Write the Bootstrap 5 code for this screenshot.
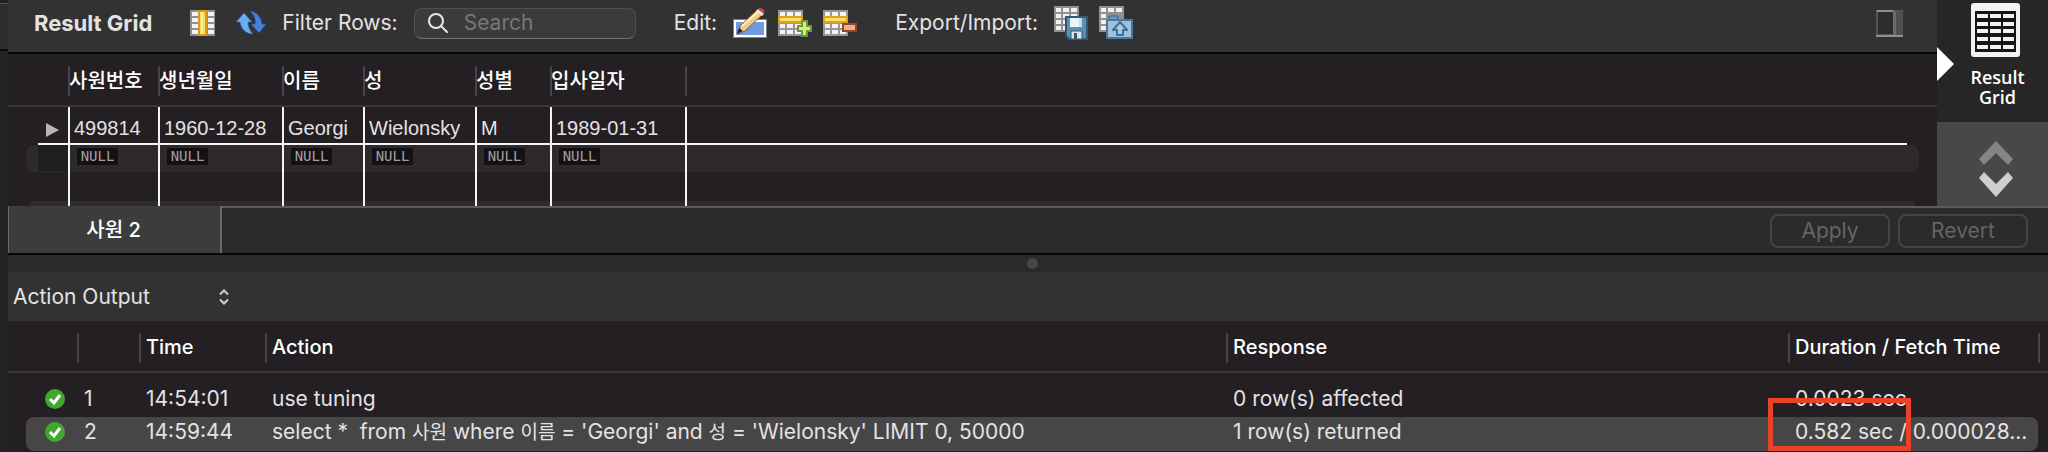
<!DOCTYPE html>
<html lang="ko" data-bs-theme="dark">
<head>
<meta charset="utf-8">
<meta name="viewport" content="width=device-width, initial-scale=1">
<title>Result Grid</title>
<link href="https://cdn.jsdelivr.net/npm/bootstrap@5.3.0/dist/css/bootstrap.min.css" rel="stylesheet">
<script src="https://cdn.jsdelivr.net/npm/bootstrap@5.3.0/dist/js/bootstrap.bundle.min.js" defer></script>
<style>
  body { background: #231f22; color: #e4e2e4; font: 21px/24px Inter, "Noto Sans CJK KR", sans-serif; min-height: 100vh; overflow-x: hidden; }
  .gutter { width: 8px; background: #242424; }
  .gutter-top { height: 51px; background: #2e2e2e; border-bottom: 2px solid #0c0c0c; }
  .gutter-top::before { content: ""; display: block; height: 4px; border-bottom: 1px solid #555; background: #202020; }
  .content-col { min-width: 0; }

  .toolbar { height: 54px; background: #323232; border-bottom: 2px solid #060606; padding: 0 34px 6px 26px; gap: 38px; white-space: nowrap; }
  .tool-group { gap: 16px; }
  .tool-icons { gap: 11px; }
  .icon-pair { gap: 21px; }
  .tool { border: 0; padding: 0; background: none; line-height: 0; }
  .tool svg { display: block; }
  .pane-title { font-size: 22px; }
  .search-box { width: 222px; height: 31px; background: #3b3b3b; border: 1px solid #505050; border-bottom-color: #747474; border-radius: 8px; padding-left: 12px; gap: 14px; }
  .search-box input { background: none; border: 0; outline: 0; color: #ddd; width: 150px; padding: 0; line-height: 24px; }
  .search-box input::placeholder { color: #777; opacity: 1; }

  .data-grid { width: 100%; table-layout: fixed; border-collapse: separate; border-spacing: 0; }
  .data-grid th, .data-grid td { padding: 0; white-space: pre; position: relative; }
  .data-grid thead th { border-bottom: 2px solid #3b383a; color: #fff; font-size: 20px; font-weight: 500; padding-top: 2px; }
  .data-grid th.rule::before { content: ""; position: absolute; left: 0; top: 12px; height: 30px; width: 2px; background: #474447; }

  .results { font-family: "Liberation Sans", "Noto Sans CJK KR", sans-serif; font-size: 20px; }
  .results th { height: 53px; padding-left: 1px !important; }
  .results tbody td + td { border-left: 2px solid #f4f4f4; padding-left: 4px; }
  .results .record td { height: 38px; padding-top: 4px; background: linear-gradient(#f4f4f4, #f4f4f4) left bottom / 100% 2px no-repeat; }
  .results .record td:first-child { background-position: right bottom; background-size: calc(100% - 30px) 2px; }
  .results .record td:last-child { background-size: calc(100% - 30px) 2px; }
  .results .blank td { height: 27px; background: #2d292c; vertical-align: top; line-height: 24px; }
  .results .blank td:first-child { background: linear-gradient(#1e1f1f, #1e1f1f) right top / 30px 26px no-repeat, linear-gradient(#2d292c, #2d292c) right top / 32px 100% no-repeat; }
  .results .blank td:first-child::before { content: ""; position: absolute; left: 18px; top: 0; bottom: 0; width: 12px; background: #2d292c; border-radius: 8px 0 0 8px; }
  .results .blank td:last-child { background: none; }
  .results .blank td:last-child::before { content: ""; position: absolute; inset: 0 18px 0 0; background: #2d292c; border-radius: 0 8px 8px 0; }
  .results .filler td { height: 34px; background: linear-gradient(#2d2b2c, #2d2b2c) left bottom / 100% 5px no-repeat; }
  .results .filler td:first-child { background-position: right bottom; background-size: calc(100% - 22px) 5px; }
  .results .filler td:last-child { background-size: calc(100% - 22px) 5px; }
  .null-tag { display: block; width: 41px; margin: 3px 0 0 3px; background: #131113; color: #a3a1a3; font: 14px/17px "DejaVu Sans Mono", monospace; text-align: center; border-radius: 1px; }
  .row-marker { display: block; margin: 4px 0 0 37px; }

  .side-panel { width: 111px; background: #262626; color: #fff; }
  .side-tab { height: 122px; padding: 3px 0 0 6px; border: 0; background: none; color: #fff; font: 600 18px/20px "Open Sans", sans-serif; position: relative; }
  .side-tab .pointer { position: absolute; left: 0; top: 47px; }
  .side-label { margin-top: 10px; padding-left: 4px; }
  .side-more { background: #484848; border: 0; padding: 10px 0 0 7px; }

  .tab-strip { height: 49px; background: #2b2b2b; border-top: 2px solid #5c5c5c; border-bottom: 2px solid #060606; }
  .result-tab { width: 214px; border: solid #6a6a6a; border-width: 0 2px 0 1px; background: #3b3d3d; color: #fff; font-size: 20px; font-weight: 500; margin-top: -2px; padding: 0 2px 0 0; }
  .strip-btn { height: 34px; border: 2px solid #444; border-radius: 8px; background: none; color: #656565; padding: 0; line-height: 24px; }
  .strip-btn.apply { width: 120px; }
  .strip-btn.revert { width: 130px; }
  .splitter { height: 17px; background: #2a2a2a; padding-left: 8px; }
  .splitter span { width: 11px; height: 11px; border-radius: 50%; background: #474747; }

  .output-bar { height: 49px; background: #323232; }
  .output-pick { width: 230px; appearance: none; border: 0; padding: 0 0 0 5px; color: #e4e2e4; line-height: 24px;
    background: url("data:image/svg+xml,%3Csvg xmlns='http://www.w3.org/2000/svg' width='12' height='18' fill='none' stroke='%23cfcfcf' stroke-width='2'%3E%3Cpath d='M2 6.500 6 2.500l4 4M2 11.500l4 4 4-4'/%3E%3C/svg%3E") right 8px center no-repeat; }

  .log th { height: 52px; padding-left: 7px !important; }
  .log td { height: 34px; padding-left: 7px; }
  .log tbody tr:first-child td { height: 44px; padding-top: 8px; }
  .log .chosen td { background: #464646; line-height: 24px; padding-bottom: 4px; }
  .log .chosen td:first-child { background: none; }
  .log .chosen td:first-child::before { content: ""; position: absolute; inset: 0 0 0 18px; background: #464646; border-radius: 8px 0 0 8px; }
  .log .chosen .last-cell { border-radius: 0 8px 8px 0; }
  .log .chosen .edge-cell { background: none; }
  .hangul { font-size: 19px; }
  .ok-mark { display: block; position: relative; margin-left: 30px; }
  .callout { position: absolute; left: -20px; top: -19px; width: 143px; height: 53px; border: 5px solid #e6432a; }
</style>
</head>
<body>
<div class="d-flex min-vh-100">
  <div class="gutter flex-shrink-0"><div class="gutter-top"></div></div>
  <div class="content-col flex-grow-1">

    <section class="d-flex">
      <div class="content-col flex-grow-1">
        <div class="toolbar d-flex align-items-center">
          <strong class="pane-title">Result Grid</strong>
          <div class="tool-group d-flex align-items-center">
            <div class="icon-pair d-flex align-items-center">
              <button class="tool" type="button" aria-label="Columns">
                <svg width="25" height="26" viewBox="0 0 25 26"><path fill="#8d8f92" d="M0 0h25v26H0z"/><path fill="#f2f3f5" d="M2 2h6v4H2zm0 6h6v4H2zm0 6h6v4H2zm0 6h6v4H2zM18 2h6v4h-6zm0 6h6v4h-6zm0 6h6v4h-6zm0 6h6v4h-6z"/><path fill="#f9dc6a" stroke="#d89a18" stroke-width="2" d="M9 1h7v24H9z"/><path fill="#fff0a0" d="M11 2h2v22h-2z"/></svg>
              </button>
              <button class="tool" type="button" aria-label="Refresh">
                <svg width="30" height="26" viewBox="0 0 30 26"><path fill="#6aaef2" stroke="#2c62b8" stroke-width=".7" d="M8 3l8 9h-4c0 5 2 9 5 12C10 24 5 19 4 12H0z"/><path fill="#477fdc" stroke="#2450a0" stroke-width=".7" d="M14 1c7 1 11 6 12 13h4l-7 9-8-9h4c1-5-1-9-5-13z"/></svg>
              </button>
            </div>
            <label for="filter-rows">Filter Rows:</label>
            <div class="search-box d-flex align-items-center">
              <svg width="23" height="22" viewBox="0 0 23 22" fill="none" stroke="#e8e8e8" stroke-width="2"><circle cx="9" cy="9" r="7"/><path d="M14 14l6 6" stroke-linecap="round"/></svg>
              <input id="filter-rows" type="text" placeholder="Search">
            </div>
          </div>
          <div class="tool-group d-flex align-items-center">
            <span>Edit:</span>
            <div class="tool-icons d-flex align-items-center">
              <button class="tool" type="button" aria-label="Edit row">
                <svg width="34" height="32" viewBox="0 0 34 32"><path fill="#7f8388" d="M0 12h34v19H0z"/><path fill="#6f9ae0" stroke="#fff" stroke-width="2" d="M2 14h30v15H2z"/><path fill="#f0c98a" stroke="#8a6030" d="M24 3l5 5L12 24l-7 3 2-8z"/><path stroke="#fff0cc" stroke-width="2" d="M9 19L25 5"/><path fill="#222" d="M6 21l4 3-6 3z"/><path fill="#e9e9e9" d="M23 4l2-2 6 5-2 2z"/><path fill="#d8443c" d="M25 2c2-3 8 1 6 5z"/></svg>
              </button>
              <button class="tool" type="button" aria-label="Add row">
                <svg width="34" height="28" viewBox="0 0 34 28"><path fill="#96989b" d="M0 1h25v26H0z"/><path fill="#f4f4f6" d="M2 3h5v4H2zm7 0h6v4H9zm8 0h6v4h-6zM2 15h5v4H2zm7 0h6v4H9zm8 0h6v4h-6zM2 21h5v4H2zm7 0h6v4H9zm8 0h6v4h-6z"/><path fill="#fbe36e" stroke="#e0a21c" stroke-width="2" d="M1 8h23v5H1z"/><path fill="#cdf08c" stroke="#6b9a35" stroke-width="2" d="M24 12h5v5h4v5h-4v5h-5v-5h-4v-5h4z"/></svg>
              </button>
              <button class="tool" type="button" aria-label="Delete row">
                <svg width="34" height="28" viewBox="0 0 34 28"><path fill="#96989b" d="M0 1h25v26H0z"/><path fill="#f4f4f6" d="M2 3h5v4H2zm7 0h6v4H9zm8 0h6v4h-6zM2 15h5v4H2zm7 0h6v4H9zm8 0h6v4h-6zM2 21h5v4H2zm7 0h6v4H9zm8 0h6v4h-6z"/><path fill="#fbe36e" stroke="#e0a21c" stroke-width="2" d="M1 8h23v5H1z"/><path fill="#eeb092" stroke="#9c4522" stroke-width="2" d="M20 15h13v7H20z"/></svg>
              </button>
            </div>
          </div>
          <div class="tool-group d-flex align-items-center">
            <span>Export/Import:</span>
            <div class="tool-icons d-flex align-items-center">
              <button class="tool" type="button" aria-label="Export">
                <svg width="34" height="34" viewBox="0 0 34 34"><path fill="#8f9194" d="M0 0h25v26H0z"/><path fill="#f1f1f3" d="M2 2h5v4H2zm7 0h6v4H9zm8 0h6v4h-6zM2 8h5v4H2zm7 0h6v4H9zm8 0h6v4h-6zM2 14h5v4H2zm7 0h6v4H9zM2 20h5v4H2zm7 0h6v4H9z"/><path fill="#5e8fb0" stroke="#2f597a" stroke-width="2" d="M12 11h21v22H15l-3-3z"/><path fill="#eef4f8" d="M16 12h12v9H16z"/><path fill="#c9dae6" d="M25 12h3v9h-3z"/><path fill="#dde3e8" stroke="#345c79" d="M17 25h11v8H17z"/><path fill="#345c79" d="M20 27h3v6h-3z"/></svg>
              </button>
              <button class="tool" type="button" aria-label="Import">
                <svg width="34" height="34" viewBox="0 0 34 34"><path fill="#8f9194" d="M0 0h25v26H0z"/><path fill="#f1f1f3" d="M2 2h5v4H2zm7 0h6v4H9zm8 0h6v4h-6zM2 8h5v4H2zm0 6h5v4H2zm0 6h5v4H2z"/><path fill="#6898bf" stroke="#3b678b" d="M10 10h9v6h-9z"/><path fill="#9cc2df" stroke="#4a789c" stroke-width="2" d="M8 14h25v18H8z"/><path fill="#a8cbe4" stroke="#426f92" stroke-width="2" stroke-linejoin="round" d="M21 16l7 8h-4v5h-6v-5h-4z"/></svg>
              </button>
            </div>
          </div>
          <button class="tool ms-auto" type="button" aria-label="Toggle panel">
            <svg width="27" height="27" viewBox="0 0 27 27"><path fill="#2c2c2c" stroke="#555" stroke-width="2" d="M1 1h25v24H1z"/><path fill="#505050" d="M17 1h9v24h-9z"/><path fill="#6c6c6c" d="M17 1h3v24h-3z"/><path stroke="#909090" stroke-width="2" d="M0 26h27M1 1h16"/></svg>
          </button>
        </div>

        <table class="data-grid results">
          <colgroup><col style="width:60px"><col style="width:90px"><col style="width:124px"><col style="width:81px"><col style="width:112px"><col style="width:75px"><col style="width:135px"><col></colgroup>
          <thead>
            <tr><th></th><th class="rule">사원번호</th><th class="rule">생년월일</th><th class="rule">이름</th><th class="rule">성</th><th class="rule">성별</th><th class="rule">입사일자</th><th class="rule"></th></tr>
          </thead>
          <tbody>
            <tr class="record"><td><svg class="row-marker" width="15" height="14" viewBox="0 0 15 14"><path fill="#b5b5b5" d="M1 0l13 7-13 7z"/></svg></td><td>499814</td><td>1960-12-28</td><td>Georgi</td><td>Wielonsky</td><td>M</td><td>1989-01-31</td><td></td></tr>
            <tr class="blank"><td></td><td><span class="null-tag">NULL</span></td><td><span class="null-tag">NULL</span></td><td><span class="null-tag">NULL</span></td><td><span class="null-tag">NULL</span></td><td><span class="null-tag">NULL</span></td><td><span class="null-tag">NULL</span></td><td></td></tr>
            <tr class="filler"><td></td><td></td><td></td><td></td><td></td><td></td><td></td><td></td></tr>
          </tbody>
        </table>
      </div>

      <aside class="side-panel d-flex flex-column flex-shrink-0">
        <button class="side-tab d-flex flex-column align-items-center" type="button">
          <svg class="pointer" width="17" height="34" viewBox="0 0 17 34"><path fill="#fff" d="M0 0l17 17L0 34z"/></svg>
          <svg width="49" height="54" viewBox="0 0 49 54"><rect width="49" height="54" rx="3" fill="#f2f2f2"/><path fill="#161616" d="M4 8h41v41H4z"/><path fill="#f2f2f2" d="M6 11h11v4H6zm13 0h11v4H19zm13 0h11v4H32zM6 19h11v4H6zm13 0h11v4H19zm13 0h11v4H32zM6 26h11v4H6zm13 0h11v4H19zm13 0h11v4H32zM6 34h11v4H6zm13 0h11v4H19zm13 0h11v4H32zM6 42h11v4H6zm13 0h11v4H19zm13 0h11v4H32z"/></svg>
          <span class="side-label">Result<br>Grid</span>
        </button>
        <button class="side-more flex-grow-1 d-flex align-items-center justify-content-center" type="button" aria-label="More views">
          <svg width="36" height="56" viewBox="0 0 36 56"><path fill="#858585" d="M18 0l17 18-5 6-12-12L6 24l-5-6z"/><path fill="#cfcfcf" d="M18 56L1 37l5-6 12 12 12-12 5 6z"/></svg>
        </button>
      </aside>
    </section>

    <div class="tab-strip d-flex align-items-stretch">
      <button class="result-tab" type="button">사원 2</button>
      <div class="ms-auto d-flex align-items-center gap-2 pe-3 me-1">
        <button class="strip-btn apply" type="button" disabled>Apply</button>
        <button class="strip-btn revert" type="button" disabled>Revert</button>
      </div>
    </div>
    <div class="splitter d-flex align-items-center justify-content-center"><span></span></div>
    <div class="output-bar d-flex align-items-center">
      <select class="output-pick" aria-label="Output"><option>Action Output</option></select>
    </div>

    <table class="data-grid log">
      <colgroup><col style="width:69px"><col style="width:62px"><col style="width:126px"><col style="width:961px"><col><col style="width:250px"><col style="width:10px"></colgroup>
      <thead>
        <tr><th></th><th class="rule"></th><th class="rule">Time</th><th class="rule">Action</th><th class="rule">Response</th><th class="rule">Duration / Fetch Time</th><th class="rule"></th></tr>
      </thead>
      <tbody>
        <tr><td><svg class="ok-mark" width="20" height="20" viewBox="0 0 20 20"><circle cx="10" cy="10" r="10" fill="#43a62e"/><path d="M5 10l4 4 6-8" fill="none" stroke="#fff" stroke-width="3"/></svg></td><td>1</td><td>14:54:01</td><td>use tuning</td><td>0 row(s) affected</td><td>0.0023 sec</td><td></td></tr>
        <tr class="chosen"><td><svg class="ok-mark" width="20" height="20" viewBox="0 0 20 20"><circle cx="10" cy="10" r="10" fill="#43a62e"/><path d="M5 10l4 4 6-8" fill="none" stroke="#fff" stroke-width="3"/></svg></td><td>2</td><td>14:59:44</td><td>select *  from <span class="hangul">사원</span> where <span class="hangul">이름</span> = 'Georgi' and <span class="hangul">성</span> = 'Wielonsky' LIMIT 0, 50000</td><td>1 row(s) returned</td><td class="last-cell">0.582 sec / 0.000028...<span class="callout"></span></td><td class="edge-cell"></td></tr>
      </tbody>
    </table>
  </div>
</div>
</body>
</html>
